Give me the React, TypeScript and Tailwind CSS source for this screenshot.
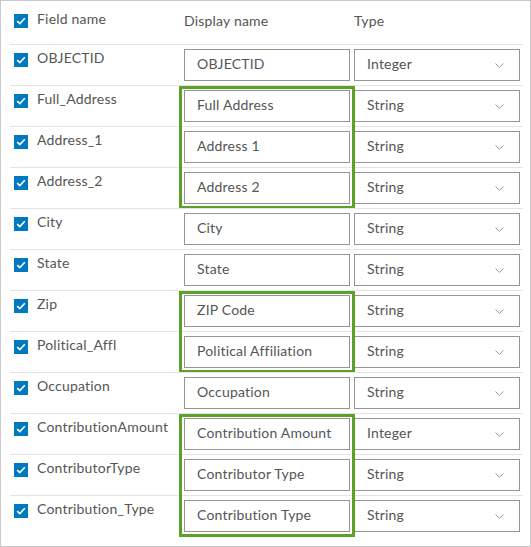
const rows: { field: string; display: string; type: string }[] = [
  { field: 'OBJECTID', display: 'OBJECTID', type: 'Integer' },
  { field: 'Full_Address', display: 'Full Address', type: 'String' },
  { field: 'Address_1', display: 'Address 1', type: 'String' },
  { field: 'Address_2', display: 'Address 2', type: 'String' },
  { field: 'City', display: 'City', type: 'String' },
  { field: 'State', display: 'State', type: 'String' },
  { field: 'Zip', display: 'ZIP Code', type: 'String' },
  { field: 'Political_Affl', display: 'Political Affiliation', type: 'String' },
  { field: 'Occupation', display: 'Occupation', type: 'String' },
  { field: 'ContributionAmount', display: 'Contribution Amount', type: 'Integer' },
  { field: 'ContributorType', display: 'Contributor Type', type: 'String' },
  { field: 'Contribution_Type', display: 'Contribution Type', type: 'String' },
];

// row index ranges outlined in green
const groups: [number, number][] = [
  [0, 0],
  [1, 3],
  [4, 5],
  [6, 7],
  [8, 8],
  [9, 11],
];
const highlighted = [false, true, false, true, false, true];

function Check() {
  return (
    <span className="flex h-[14px] w-[14px] flex-shrink-0 items-center justify-center bg-[#0079c1]">
      <svg width="10" height="8" viewBox="0 0 10 8" fill="none">
        <path d="M1.2 4.2 L3.8 6.6 L8.8 1.2" stroke="white" strokeWidth="1.6" />
      </svg>
    </span>
  );
}

function Row({ field, display, type }: { field: string; display: string; type: string }) {
  return (
    <div className="flex h-[41px] border-t border-[#e4e4e4]">
      <div className="flex w-[174px] items-start pl-[4px]">
        <div className="mt-[8px]">
          <Check />
        </div>
        <span className="ml-[9px] mt-[3px] leading-5">{field}</span>
      </div>
      <div className="flex items-center">
        <div className="flex h-[32px] w-[166px] items-center border border-[#959595] pb-[4px] pl-[12px]">{display}</div>
      </div>
      <div className="ml-[4px] flex items-center">
        <div className="flex h-[32px] w-[166px] items-center justify-between border border-[#959595] pl-[12px] pr-[15px]">
          <span className="mb-[4px]">{type}</span>
          <svg width="9" height="5" viewBox="0 0 9 5" fill="none">
            <path d="M0.5 0.5 L4.5 4.3 L8.5 0.5" stroke="#9a9a9a" strokeWidth="1" />
          </svg>
        </div>
      </div>
    </div>
  );
}

export default function App() {
  return (
    <div
      className="h-[547px] w-[531px] border border-[#c9c9c9] bg-white pl-[9px] pr-[7px] text-[14px] tracking-[0.2px] text-[#555555]"
      style={{ fontFamily: 'Lato, "Open Sans", sans-serif' }}
    >
      {/* Header */}
      <div className="flex h-[43px]">
        <div className="flex w-[174px] items-start pl-[4px]">
          <div className="mt-[13px]">
            <Check />
          </div>
          <span className="ml-[9px] mt-[8px] leading-5">Field name</span>
        </div>
        <span className="mt-[10px] w-[170px] leading-5">Display name</span>
        <span className="mt-[10px] leading-5">Type</span>
      </div>

      {groups.map(([start, end], g) => (
        <div key={g} className="relative">
          {rows.slice(start, end + 1).map((r) => (
            <Row key={r.field} {...r} />
          ))}
          {highlighted[g] && (
            <div className="pointer-events-none absolute top-[1px] bottom-[-1px] left-[169px] w-[176px] border-[3px] border-[#5da226]" />
          )}
        </div>
      ))}
    </div>
  );
}
